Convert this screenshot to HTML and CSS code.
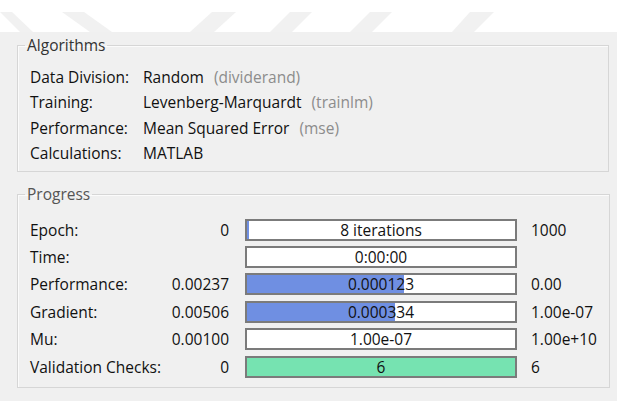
FILE: index.html
```html
<!DOCTYPE html>
<html lang="en">
<head>
    <meta charset="UTF-8">
    <meta name="viewport" content="width=device-width, initial-scale=1.0">
    <title>Neural Network Training</title>
    <link rel="stylesheet" href="styles.css">
</head>
<body>
    <div class="backdrop">
        <svg class="watermark" width="621" height="32" viewBox="0 0 621 32">
            <polygon points="0,12 12,12 33,32 20,32" />
            <polygon points="62,12 84,12 112,32 90,32" />
            <polygon points="212,12 236,12 214,32 190,32" />
            <polygon points="290,12 312,12 292,32 270,32" />
            <polygon points="370,12 392,12 372,32 350,32" />
            <polygon points="470,12 494,12 474,32 452,32" />
        </svg>
    </div>

    <div class="window">
        <fieldset class="group">
            <legend>Algorithms</legend>
            <div class="info">
                <span class="label">Data Division:</span>
                <span>Random <span class="hint">(dividerand)</span></span>

                <span class="label">Training:</span>
                <span>Levenberg-Marquardt <span class="hint">(trainlm)</span></span>

                <span class="label">Performance:</span>
                <span>Mean Squared Error <span class="hint">(mse)</span></span>

                <span class="label">Calculations:</span>
                <span>MATLAB</span>
            </div>
        </fieldset>

        <fieldset class="group progress">
            <legend>Progress</legend>
            <div class="rows">
                <span class="label">Epoch:</span>
                <span class="start">0</span>
                <div class="bar"><div class="fill blue" style="width: 0.8%"></div><span class="bar-text">8 iterations</span></div>
                <span class="end">1000</span>

                <span class="label">Time:</span>
                <span class="start"></span>
                <div class="bar"><span class="bar-text">0:00:00</span></div>
                <span class="end"></span>

                <span class="label">Performance:</span>
                <span class="start">0.00237</span>
                <div class="bar"><div class="fill blue" style="width: 58.5%"></div><span class="bar-text">0.000123</span></div>
                <span class="end">0.00</span>

                <span class="label">Gradient:</span>
                <span class="start">0.00506</span>
                <div class="bar"><div class="fill blue" style="width: 55.2%"></div><span class="bar-text">0.000334</span></div>
                <span class="end">1.00e-07</span>

                <span class="label">Mu:</span>
                <span class="start">0.00100</span>
                <div class="bar"><span class="bar-text">1.00e-07</span></div>
                <span class="end">1.00e+10</span>

                <span class="label">Validation Checks:</span>
                <span class="start">0</span>
                <div class="bar"><div class="fill green" style="width: 100%"></div><span class="bar-text">6</span></div>
                <span class="end">6</span>
            </div>
        </fieldset>
    </div>
</body>
</html>
```

FILE: styles.css
```css
body {
    margin: 0;
    width: 621px;
    height: 407px;
    background: #fff;
    font-family: "Open Sans", "Noto Sans", sans-serif;
    font-size: 15.5px;
    color: #111;
    overflow: hidden;
}

.backdrop {
    height: 32px;
}

.watermark {
    display: block;
}

.watermark polygon {
    fill: #f1f1f1;
}

.window {
    width: 617px;
    height: 369px;
    box-sizing: border-box;
    background: #f0f0f0;
    padding: 4px 8px 0 17px;
}

.group {
    margin: 0;
    padding: 9px 12px 5px 12px;
    border: 1px solid #d6d6d6;
    box-shadow: inset 1px 1px 0 #fbfbfb;
}

.group legend {
    padding: 0 2px;
    margin-left: -5px;
    line-height: 19px;
    color: #333;
}

.info {
    display: grid;
    grid-template-columns: 113px auto;
    grid-auto-rows: 25.5px;
    align-items: center;
}

.hint {
    color: #8c8c8c;
    margin-left: 6px;
}

.progress {
    margin-top: 13px;
    padding-top: 12px;
    padding-bottom: 7px;
}

.progress legend {
    color: #555;
}

.rows {
    display: grid;
    grid-template-columns: 140px 59px 288px auto;
    grid-auto-rows: 27.4px;
    align-items: center;
}

.start {
    text-align: right;
}

.bar {
    position: relative;
    height: 22px;
    margin-left: 16px;
    box-sizing: border-box;
    border: 2px solid #7b7b7b;
    background: #fff;
    display: flex;
    align-items: center;
    justify-content: center;
}

.fill {
    position: absolute;
    left: 0;
    top: 0;
    bottom: 0;
}

.fill.blue {
    background: #6f8fe2;
}

.fill.green {
    background: #76e3b1;
}

.bar-text {
    position: relative;
    color: #111;
}

.end {
    margin-left: 14px;
}
```
